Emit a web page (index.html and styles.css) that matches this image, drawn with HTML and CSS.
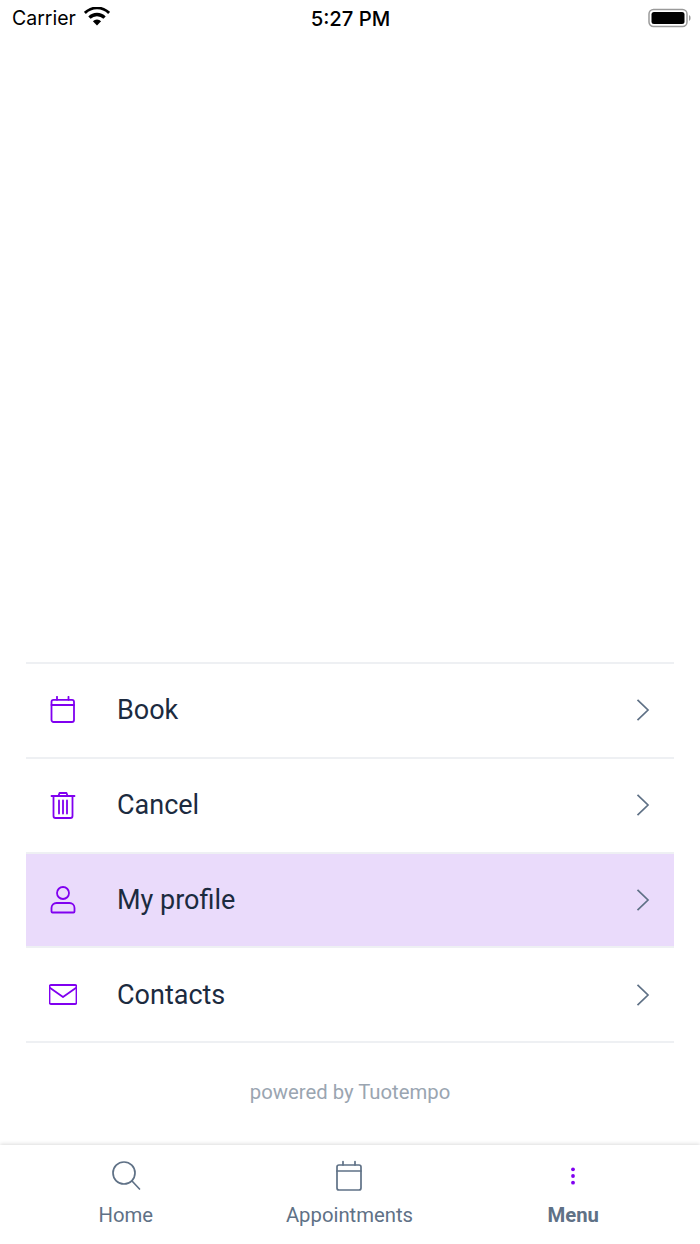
FILE: index.html
```html
<!DOCTYPE html>
<html lang="en">
<head>
  <meta charset="UTF-8">
  <title>Menu</title>
  <link rel="stylesheet" href="styles.css">
</head>
<body>
  <div class="status-bar">
    <div class="status-left">
      <span class="carrier">Carrier</span>
      <svg class="wifi" width="26" height="19" viewBox="0 0 26 19">
        <path d="M13 18.5 8.9 14.2a5.8 5.8 0 0 1 8.2 0Z" fill="#000"/>
        <path d="M6.6 11.8a9 9 0 0 1 12.8 0l2.3-2.4a12.3 12.3 0 0 0-17.4 0Z" fill="#000"/>
        <path d="M1.9 7a15.6 15.6 0 0 1 22.2 0l2-2.1A18.6 18.6 0 0 0-.1 4.9Z" fill="#000"/>
      </svg>
    </div>
    <span class="clock">5:27 PM</span>
    <div class="status-right">
      <svg width="44" height="20" viewBox="0 0 44 20">
        <rect x="1" y="1.5" width="38" height="17" rx="4.5" fill="none" stroke="#9a9a9a" stroke-width="1.5"/>
        <rect x="3.5" y="4" width="33" height="12" rx="2.5" fill="#000"/>
        <path d="M41 7v6a3 3 0 0 0 1.6-3A3 3 0 0 0 41 7Z" fill="#9a9a9a"/>
      </svg>
    </div>
  </div>

  <main class="content">
    <ul class="menu">
      <li class="menu-row">
        <span class="menu-icon">
          <svg width="28" height="28" viewBox="0 0 28 28" fill="none" stroke="#8000f0" stroke-width="1.8" stroke-linejoin="round" stroke-linecap="round">
            <rect x="2.5" y="3.8" width="22.5" height="22.2" rx="2"/>
            <path d="M2.5 9h22.5M8 .8v3M19.5 .8v3"/>
          </svg>
        </span>
        <span class="menu-label">Book</span>
        <svg class="chevron" width="14" height="22" viewBox="0 0 14 22" fill="none" stroke="#5f7186" stroke-width="1.7"><path d="M1.5 .8 12 11 1.5 21.2"/></svg>
      </li>
      <li class="menu-row">
        <span class="menu-icon">
          <svg width="28" height="28" viewBox="0 0 28 28" fill="none" stroke="#8000f0" stroke-width="1.8" stroke-linejoin="round" stroke-linecap="round">
            <path d="M2.5 5h23M9.5 4.8 10.5 2h7l1 2.8M4.5 5v20a2 2 0 0 0 2 2h15a2 2 0 0 0 2-2V5"/>
            <path d="M10 9.5v13M14 9.5v13M18 9.5v13"/>
          </svg>
        </span>
        <span class="menu-label">Cancel</span>
        <svg class="chevron" width="14" height="22" viewBox="0 0 14 22" fill="none" stroke="#5f7186" stroke-width="1.7"><path d="M1.5 .8 12 11 1.5 21.2"/></svg>
      </li>
      <li class="menu-row is-active">
        <span class="menu-icon">
          <svg width="28" height="28" viewBox="0 0 28 28" fill="none" stroke="#8000f0" stroke-width="1.8" stroke-linejoin="round">
            <circle cx="14" cy="7" r="6"/>
            <path d="M7.5 17h13a5 5 0 0 1 5 5v3.5a1 1 0 0 1-1 1H3.5a1 1 0 0 1-1-1V22a5 5 0 0 1 5-5Z"/>
          </svg>
        </span>
        <span class="menu-label">My profile</span>
        <svg class="chevron" width="14" height="22" viewBox="0 0 14 22" fill="none" stroke="#5f7186" stroke-width="1.7"><path d="M1.5 .8 12 11 1.5 21.2"/></svg>
      </li>
      <li class="menu-row">
        <span class="menu-icon">
          <svg width="28" height="28" viewBox="0 0 28 28" fill="none" stroke="#8000f0" stroke-width="1.8" stroke-linejoin="round" stroke-linecap="round">
            <rect x=".5" y="4" width="27" height="19" rx="1.5"/>
            <path d="M1.2 7 14 16 26.8 7"/>
          </svg>
        </span>
        <span class="menu-label">Contacts</span>
        <svg class="chevron" width="14" height="22" viewBox="0 0 14 22" fill="none" stroke="#5f7186" stroke-width="1.7"><path d="M1.5 .8 12 11 1.5 21.2"/></svg>
      </li>
    </ul>
    <p class="powered">powered by Tuotempo</p>
  </main>

  <nav class="tabbar">
    <div class="tab">
      <svg width="32" height="32" viewBox="0 0 32 32" fill="none" stroke="#5f7186" stroke-width="1.7" stroke-linecap="round">
        <circle cx="14" cy="13" r="11"/>
        <path d="M22 21 29.5 29"/>
      </svg>
      <span>Home</span>
    </div>
    <div class="tab">
      <svg width="32" height="32" viewBox="0 0 32 32" fill="none" stroke="#5f7186" stroke-width="1.7" stroke-linejoin="round" stroke-linecap="round">
        <rect x="4" y="5" width="24" height="25" rx="2"/>
        <path d="M4 11h24M10 1.5v3.5M22 1.5v3.5"/>
      </svg>
      <span>Appointments</span>
    </div>
    <div class="tab is-current">
      <svg width="32" height="32" viewBox="0 0 32 32" fill="#8000f0">
        <circle cx="16" cy="9.3" r="1.9"/>
        <circle cx="16" cy="16" r="1.9"/>
        <circle cx="16" cy="22.7" r="1.9"/>
      </svg>
      <span>Menu</span>
    </div>
  </nav>
</body>
</html>
```

FILE: styles.css
```css
* {
  box-sizing: border-box;
}

body {
  margin: 0;
  height: 1244px;
  display: flex;
  flex-direction: column;
  background: #fff;
  font-family: Roboto, "Liberation Sans", sans-serif;
  overflow: hidden;
}

.status-bar {
  height: 36px;
  flex: none;
  display: grid;
  grid-template-columns: 1fr auto 1fr;
  align-items: center;
  padding: 0 8px 0 12px;
  font-family: Inter, "Liberation Sans", sans-serif;
  color: #000;
}

.status-left {
  display: flex;
  align-items: center;
  gap: 8px;
}

.carrier {
  font-size: 19.5px;
}

.clock {
  margin-left: -3px;
  font-size: 20.3px;
  font-weight: 500;
}

.status-right {
  display: flex;
  justify-content: flex-end;
}

.wifi {
  margin-top: -3px;
}

.content {
  flex: 1;
  display: flex;
  flex-direction: column;
  justify-content: flex-end;
  padding: 0 26px;
}

.menu {
  list-style: none;
  margin: 0;
  padding: 0;
  border-bottom: 2px solid #eef0f3;
}

.menu-row {
  height: 94.75px;
  display: flex;
  align-items: center;
  padding: 0 24px 0 23px;
  border-top: 2px solid #eef0f3;
}

.menu-row.is-active {
  background: #eadbfb;
}

.menu-icon {
  width: 28px;
  height: 28px;
  display: flex;
}

.menu-label {
  flex: 1;
  margin-left: 40px;
  font-size: 27px;
  color: #1c2b3f;
}

.powered {
  margin: 0;
  height: 102px;
  padding-top: 37px;
  text-align: center;
  font-size: 20.3px;
  color: #9aa5b1;
}

.tabbar {
  height: 99px;
  flex: none;
  display: grid;
  grid-template-columns: repeat(3, 1fr);
  padding: 15px 15px 0 14px;
  background: #fff;
  box-shadow: 0 -1px 4px rgba(0, 0, 0, 0.14);
}

.tab {
  display: flex;
  flex-direction: column;
  align-items: center;
  gap: 11px;
  font-size: 20.3px;
  color: #5f7186;
}

.tab.is-current span {
  font-weight: 700;
}
```
